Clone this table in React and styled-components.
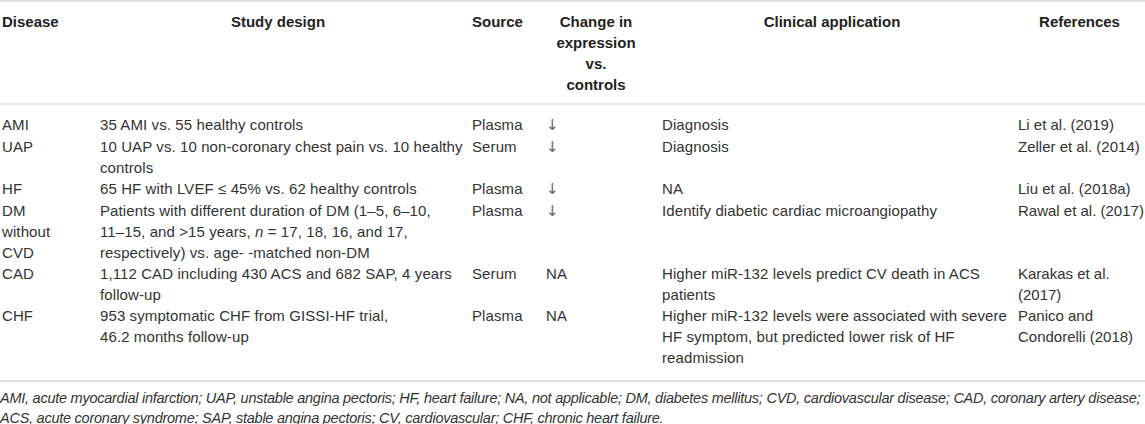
import React from 'react';
import styled, { createGlobalStyle } from 'styled-components';

const GlobalStyle = createGlobalStyle`
    body {
        margin: 0;
        background: #fff;
    }
`;

const Wrapper = styled.div`
    width: 1145px;
    font-family: "Liberation Sans", Arial, sans-serif;
    font-size: 15px;
    line-height: 21px;
    letter-spacing: 0.1px;
    color: #333;
`;

const Table = styled.table`
    width: 100%;
    border-collapse: collapse;
    table-layout: fixed;
    border-top: 2px solid #dedede;
    border-bottom: 2px solid #dedede;
`;

const HeadRow = styled.tr`
    border-bottom: 2px solid #e2e2e2;
`;

const HeadCell = styled.th`
    padding: 9px ${props => (props.$end ? '4px' : '14px')} 8px 2px;
    font-weight: bold;
    letter-spacing: 0;
    color: #222;
    vertical-align: top;
    text-align: ${props => (props.$center ? 'center' : 'left')};
`;

const Cell = styled.td`
    padding: ${props => (props.$first ? '9px' : '0')} 2px ${props => (props.$last ? '12px' : '0')} 2px;
    vertical-align: top;
    white-space: nowrap;
    letter-spacing: ${props => (props.$end ? '0' : '0.1px')};
`;

const Arrow = styled.span`
    font-family: "DejaVu Sans", sans-serif;
    font-size: 15px;
    color: #666;
`;

const Note = styled.p`
    margin: 6px 0 0 0;
    font-size: 14.5px;
    line-height: 20px;
    font-style: italic;
    letter-spacing: -0.25px;
    white-space: nowrap;
    color: #333;
`;

const down = <Arrow>↓</Arrow>;

const columns = [
    { title: 'Disease', width: 98 },
    { title: 'Study design', width: 372, center: true },
    { title: 'Source', width: 74 },
    { title: ['Change in', 'expression', 'vs.', 'controls'], width: 116, center: true },
    { title: 'Clinical application', width: 356, center: true },
    { title: 'References', width: 129, center: true, end: true },
];

const rows = [
    [
        ['AMI'],
        ['35 AMI vs. 55 healthy controls'],
        ['Plasma'],
        [down],
        ['Diagnosis'],
        ['Li et al. (2019)'],
    ],
    [
        ['UAP'],
        ['10 UAP vs. 10 non-coronary chest pain vs. 10 healthy', 'controls'],
        ['Serum'],
        [down],
        ['Diagnosis'],
        ['Zeller et al. (2014)'],
    ],
    [
        ['HF'],
        ['65 HF with LVEF ≤ 45% vs. 62 healthy controls'],
        ['Plasma'],
        [down],
        ['NA'],
        ['Liu et al. (2018a)'],
    ],
    [
        ['DM', 'without', 'CVD'],
        [
            'Patients with different duration of DM (1–5, 6–10,',
            <>11–15, and &gt;15 years, <i>n</i> = 17, 18, 16, and 17,</>,
            'respectively) vs. age- -matched non-DM',
        ],
        ['Plasma'],
        [down],
        ['Identify diabetic cardiac microangiopathy'],
        ['Rawal et al. (2017)'],
    ],
    [
        ['CAD'],
        ['1,112 CAD including 430 ACS and 682 SAP, 4 years', 'follow-up'],
        ['Serum'],
        ['NA'],
        ['Higher miR-132 levels predict CV death in ACS', 'patients'],
        ['Karakas et al.', '(2017)'],
    ],
    [
        ['CHF'],
        ['953 symptomatic CHF from GISSI-HF trial,', '46.2 months follow-up'],
        ['Plasma'],
        ['NA'],
        [
            'Higher miR-132 levels were associated with severe',
            'HF symptom, but predicted lower risk of HF',
            'readmission',
        ],
        ['Panico and', 'Condorelli (2018)'],
    ],
];

function Lines({ lines }) {
    return lines.map((line, index) => (
        <React.Fragment key={index}>
            {index > 0 && <br />}
            {line}
        </React.Fragment>
    ));
}

function App() {
    return (
        <Wrapper>
            <GlobalStyle />
            <Table>
                <colgroup>
                    {columns.map((col, index) => (
                        <col key={index} style={{ width: col.width }} />
                    ))}
                </colgroup>
                <thead>
                    <HeadRow>
                        {columns.map((col, index) => (
                            <HeadCell key={index} $center={col.center} $end={col.end}>
                                <Lines lines={[].concat(col.title)} />
                            </HeadCell>
                        ))}
                    </HeadRow>
                </thead>
                <tbody>
                    {rows.map((row, rowIndex) => (
                        <tr key={rowIndex}>
                            {row.map((cell, cellIndex) => (
                                <Cell
                                    key={cellIndex}
                                    $first={rowIndex === 0}
                                    $last={rowIndex === rows.length - 1}
                                    $end={cellIndex === row.length - 1}
                                >
                                    <Lines lines={cell} />
                                </Cell>
                            ))}
                        </tr>
                    ))}
                </tbody>
            </Table>
            <Note>
                AMI, acute myocardial infarction; UAP, unstable angina pectoris; HF, heart failure; NA, not
                applicable; DM, diabetes mellitus; CVD, cardiovascular disease; CAD, coronary artery disease;
                <br />
                ACS, acute coronary syndrome; SAP, stable angina pectoris; CV, cardiovascular; CHF, chronic
                heart failure.
            </Note>
        </Wrapper>
    );
}

export default App;
